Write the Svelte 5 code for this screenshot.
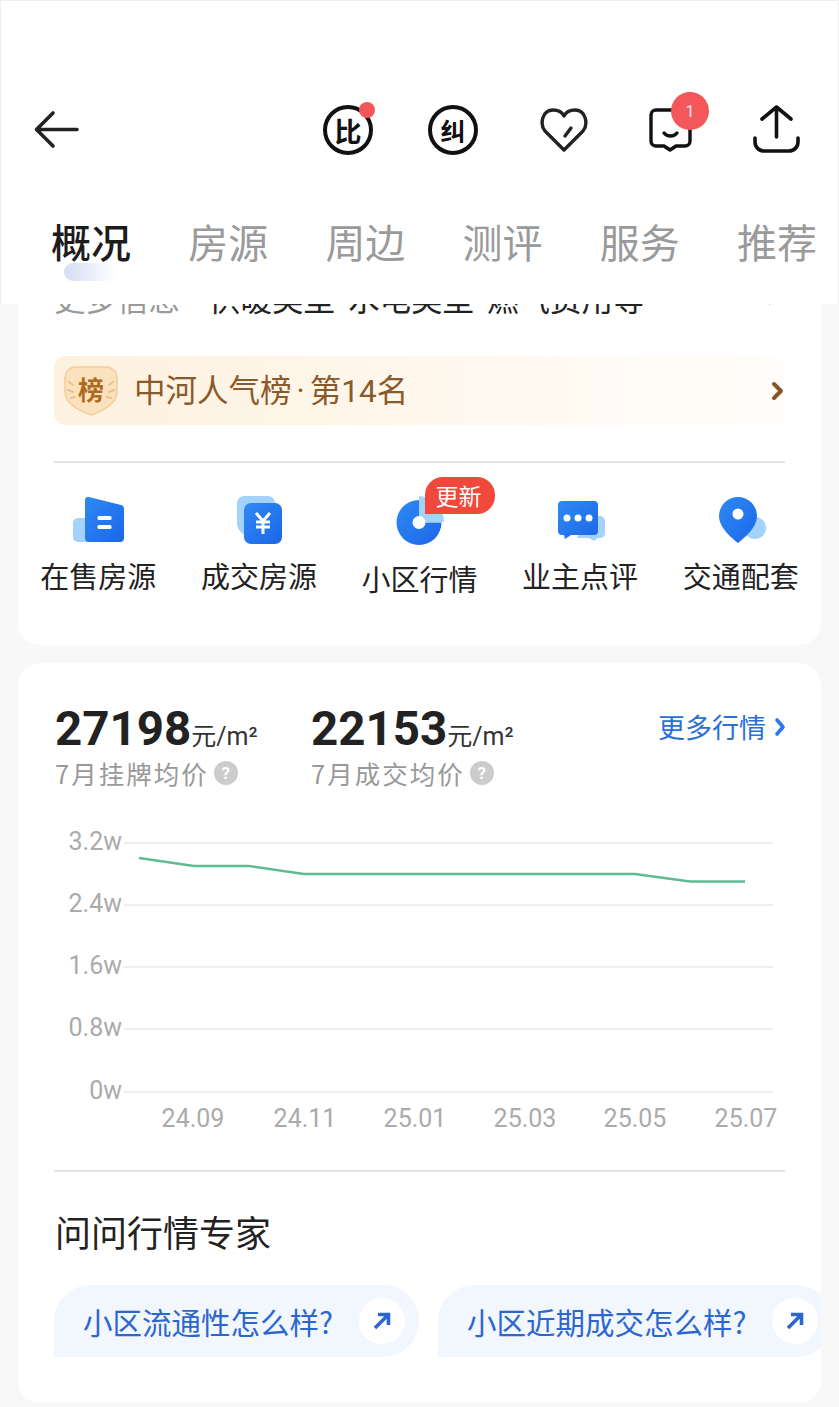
<script>
  const tabs = ['概况', '房源', '周边', '测评', '服务', '推荐'];
  const shortcuts = [
    { key: 'sale', label: '在售房源' },
    { key: 'deal', label: '成交房源' },
    { key: 'market', label: '小区行情', isNew: true },
    { key: 'review', label: '业主点评' },
    { key: 'traffic', label: '交通配套' },
  ];
  const stats = [
    { price: 27198, label: '7月挂牌均价' },
    { price: 22153, label: '7月成交均价' },
  ];

  const yTicks = [
    { y: 843, label: '3.2w' },
    { y: 905, label: '2.4w' },
    { y: 967, label: '1.6w' },
    { y: 1029, label: '0.8w' },
    { y: 1092, label: '0w' },
  ];
  const xTicks = [
    { x: 193, label: '24.09' },
    { x: 305, label: '24.11' },
    { x: 415, label: '25.01' },
    { x: 525, label: '25.03' },
    { x: 635, label: '25.05' },
    { x: 746, label: '25.07' },
  ];
  const linePoints = '139,858 194,866 249,866 304,874 635,874 690,881.5 745,881.5';
  const questions = ['小区流通性怎么样?', '小区近期成交怎么样?'];
</script>

<div class="page">
  <header class="topbar">
    <div class="actions">
      <svg class="back" width="48" height="40" viewBox="0 0 48 40" fill="none" stroke="#222" stroke-width="3.6" stroke-linecap="round" stroke-linejoin="round">
        <path d="M44 19.5H4M20 3 3.500 19.500 20 36" />
      </svg>
      <div class="icons">
        <div class="round-icon">比<span class="red-dot"></span></div>
        <div class="round-icon small">纠</div>
        <svg class="heart" width="48" height="46" viewBox="0 0 48 46" fill="none" stroke="#222" stroke-width="3.400" stroke-linecap="round" stroke-linejoin="round">
          <path d="M24 43 5 24C-1 16 3 3 13 3c5 0 9 2 11 6 2-4 6-6 11-6 10 0 14 13 8 21Z" />
          <path d="M25 29l6-8" />
        </svg>
        <div class="msg">
          <svg width="46" height="50" viewBox="0 0 46 50" fill="none" stroke="#111" stroke-width="3.400" stroke-linecap="round" stroke-linejoin="round">
            <path d="M9 5H38a5 5 0 0 1 5 5V36a5 5 0 0 1-5 5H29l-6 4-6-4H9a5 5 0 0 1-5-5V10a5 5 0 0 1 5-5Z" />
            <path d="M17 28c3 4 10 4 13 0" />
          </svg>
          <span class="badge">1</span>
        </div>
        <svg class="share" width="50" height="54" viewBox="0 0 50 54" fill="none" stroke="#111" stroke-width="3.600" stroke-linecap="round" stroke-linejoin="round">
          <path d="M24.500 34V4M10 16 24.500 4 39 16" />
          <path d="M3 35v4a9 9 0 0 0 9 9H37a9 9 0 0 0 9-9v-4" />
        </svg>
      </div>
    </div>
    <nav class="tabs">
      {#each tabs as tab, i}
        <div class="tab" class:active={i === 0}>{tab}</div>
      {/each}
    </nav>
  </header>

  <main class="content">
    <section class="card first">
      <div class="more-info">
        <span class="more-label">更多信息</span>
        <span class="more-value">供暖类型 水电类型 燃气费用等</span>
        <svg class="more-arrow" width="12" height="18" viewBox="0 0 12 18" fill="none" stroke="#bbb" stroke-width="2.500"><path d="M2 2l7 7-7 7" /></svg>
      </div>

      <div class="rank">
        <div class="rank-badge">
          <svg width="54" height="50" viewBox="0 0 54 50" fill="none">
            <path d="M12 1H42a11 11 0 0 1 11 11V26C53 38 38 45 27 49 16 45 1 38 1 26V12A11 11 0 0 1 12 1Z" fill="#fbe2bf" stroke="#f5cd9b" stroke-width="1.500" />
            <path d="M5 16l4 3M4 24l5 2M7 32l4-1M49 16l-4 3M50 24l-5 2M47 32l-4-1" stroke="#e9c08c" stroke-width="2" stroke-linecap="round" />
          </svg>
          <span>榜</span>
        </div>
        <span class="rank-text">中河人气榜<span class="rank-dot">·</span>第14名</span>
        <svg width="14" height="20" viewBox="0 0 14 20" fill="none" stroke="#8a5526" stroke-width="4" stroke-linecap="round" stroke-linejoin="round"><path d="M3 3l7 7-7 7" /></svg>
      </div>

      <div class="line"></div>

      <div class="shortcuts">
        {#each shortcuts as item}
          <div class="shortcut" class:lower={item.isNew}>
            <div class="shortcut-icon">
              {#if item.key === 'sale'}
                <svg width="52" height="48" viewBox="0 0 52 48">
                  <defs>
                    <linearGradient id="blue" x1="0" y1="0" x2="1" y2="1">
                      <stop offset="0" stop-color="#2e8af2" />
                      <stop offset="1" stop-color="#1c66ea" />
                    </linearGradient>
                  </defs>
                  <path d="M6 22h12v24H6a5 5 0 0 1-5-5V27a5 5 0 0 1 5-5Z" fill="#a3d3fb" />
                  <path d="M13 4a3 3 0 0 1 4-3l32 8a4 4 0 0 1 3 4v29a4 4 0 0 1-4 4H17a4 4 0 0 1-4-4Z" fill="url(#blue)" />
                  <rect x="25.500" y="20" width="14" height="4" rx="1.500" fill="#fff" />
                  <rect x="25.500" y="29" width="14" height="4" rx="1.500" fill="#fff" />
                </svg>
              {:else if item.key === 'deal'}
                <svg width="48" height="48" viewBox="0 0 48 48">
                  <path d="M9 0H33a7 7 0 0 1 7 7v33H15C8 40 2 34 2 27V7a7 7 0 0 1 7-7Z" fill="#a3d3fb" />
                  <rect x="9" y="7" width="38" height="41" rx="7" fill="url(#blue)" />
                  <path d="M21 17l7 8 7-8M28 25v13M21 26h14M21 31h14" fill="none" stroke="#fff" stroke-width="3" />
                </svg>
              {:else if item.key === 'market'}
                <svg class="pie" width="50" height="54" viewBox="0 0 50 54">
                  <path d="M25 3a26 26 0 0 1 25 26H25Z" fill="#a3d3fb" />
                  <path d="M25 7a22.500 22.500 0 1 0 22.500 22.500H25Z" fill="url(#blue)" />
                  <circle cx="25" cy="29.500" r="6.500" fill="#fff" />
                </svg>
                <span class="new-tag">更新</span>
              {:else if item.key === 'review'}
                <svg width="50" height="42" viewBox="0 0 50 42">
                  <path d="M33 17h12a5 5 0 0 1 5 5v13a5 5 0 0 1-5 4h-2l-4 3-5-3H22Z" fill="#a3d3fb" />
                  <path d="M7 2H39a4 4 0 0 1 4 4V32a4 4 0 0 1-4 4H16l-6 4-1-4H7a4 4 0 0 1-4-4V6a4 4 0 0 1 4-4Z" fill="url(#blue)" />
                  <circle cx="12" cy="19" r="3.500" fill="#fff" />
                  <circle cx="23" cy="19" r="3.500" fill="#fff" />
                  <circle cx="34" cy="19" r="3.500" fill="#fff" />
                </svg>
              {:else}
                <svg width="50" height="48" viewBox="0 0 50 48">
                  <circle cx="39" cy="32" r="11" fill="#a3d3fb" />
                  <path d="M22 47C16 42 3 32 3 20a19 19 0 0 1 38 0c0 12-13 22-19 27Z" fill="url(#blue)" />
                  <circle cx="22" cy="18" r="5.500" fill="#fff" />
                </svg>
              {/if}
            </div>
            <div class="shortcut-label">{item.label}</div>
          </div>
        {/each}
      </div>
    </section>

    <section class="card second">
      <div class="stats">
        {#each stats as stat}
          <div class="stat">
            <div class="stat-value"><b>{stat.price}</b><span>元/m²</span></div>
            <div class="stat-label">{stat.label}<i class="help">?</i></div>
          </div>
        {/each}
        <div class="more-market">
          更多行情
          <svg width="12" height="20" viewBox="0 0 12 20" fill="none" stroke="#2a78ea" stroke-width="3.600" stroke-linecap="round" stroke-linejoin="round"><path d="M3 3l6 7-6 7" /></svg>
        </div>
      </div>

      <svg class="chart" width="802" height="320" viewBox="18 823 802 320">
        {#each yTicks as t}
          <line x1="124" x2="773" y1={t.y} y2={t.y} stroke="#e8e8e8" stroke-width="1.500" />
          <text x="122" y={t.y + 7} text-anchor="end" class="axis">{t.label}</text>
        {/each}
        {#each xTicks as t}
          <text x={t.x} y="1127" text-anchor="middle" class="axis">{t.label}</text>
        {/each}
        <polyline points={linePoints} fill="none" stroke="#5ebb92" stroke-width="2.500" />
      </svg>

      <div class="line wide"></div>

      <h2 class="ask-title">问问行情专家</h2>
      <div class="questions">
        {#each questions as q}
          <div class="question">
            <span class="question-text">{q}</span>
            <span class="question-go">
              <svg width="20" height="20" viewBox="0 0 20 20" fill="none" stroke="#2c66cf" stroke-width="3.600"><path d="M3 17 16 4M6 3.500h10.500V14" /></svg>
            </span>
          </div>
        {/each}
      </div>
    </section>
  </main>
</div>

<style>
  :global(body) {
    margin: 0;
    background: #f8f8f8;
  }

  .page {
    width: 839px;
    height: 1407px;
    overflow: hidden;
    font-family: "Noto Sans CJK SC", "Noto Sans", sans-serif;
    display: flex;
    flex-direction: column;
  }

  .topbar {
    height: 304px;
    flex-shrink: 0;
    box-sizing: border-box;
    background: #fff;
    border: 1px solid #eee;
    border-bottom: none;
    position: relative;
    z-index: 2;
    padding-top: 89px;
  }

  .actions {
    height: 80px;
    display: flex;
    align-items: center;
    justify-content: space-between;
    padding: 0 36px 0 32px;
  }

  .icons {
    display: flex;
    align-items: center;
  }

  .round-icon {
    position: relative;
    width: 50px;
    height: 50px;
    box-sizing: border-box;
    border: 4px solid #111;
    border-radius: 50%;
    display: flex;
    align-items: center;
    justify-content: center;
    font-size: 27px;
    font-weight: 700;
    line-height: 1;
    color: #111;
  }

  .round-icon.small {
    font-size: 25px;
    margin-left: 55px;
  }

  .heart {
    margin-left: 62px;
  }

  .msg {
    margin-left: 59px;
  }

  .share {
    margin-left: 59px;
  }

  .red-dot {
    position: absolute;
    top: -7px;
    right: -6px;
    width: 16px;
    height: 16px;
    border-radius: 50%;
    background: #f4575a;
  }

  .msg {
    position: relative;
    height: 50px;
  }

  .badge {
    position: absolute;
    top: -13px;
    left: 24px;
    width: 38px;
    height: 38px;
    border-radius: 50%;
    background: #f4575a;
    color: #fde;
    font-family: "Roboto", sans-serif;
    font-size: 17px;
    line-height: 38px;
    text-align: center;
  }

  .tabs {
    display: flex;
    justify-content: space-between;
    padding: 42px 21px 0 50px;
  }

  .tab {
    position: relative;
    font-size: 40px;
    line-height: 58px;
    color: #9a9a9a;
  }

  .tab.active {
    color: #1c1c1c;
    font-weight: 500;
  }

  .tab.active::after {
    content: "";
    position: absolute;
    left: 13px;
    top: 51px;
    width: 52px;
    height: 18px;
    border-radius: 9px;
    background: linear-gradient(90deg, #d3ddf3, #ffffff);
    z-index: -1;
  }

  .content {
    flex: 1;
    min-height: 0;
    padding: 0 18px;
    display: flex;
    flex-direction: column;
    gap: 18px;
  }

  .card {
    background: #fff;
    border-radius: 22px;
    flex-shrink: 0;
  }

  .first {
    margin-top: -41px;
    height: 382px;
    padding: 14px 36px 0;
    box-sizing: border-box;
    border-radius: 0 0 22px 22px;
  }

  .more-info {
    display: flex;
    align-items: center;
    height: 40px;
    font-size: 31.500px;
    line-height: 40px;
    white-space: nowrap;
  }

  .more-label {
    color: #999;
    width: 155px;
  }

  .more-value {
    color: #222;
    flex: 1;
    word-spacing: 6px;
  }

  .more-arrow {
    margin-right: 6px;
  }

  .rank {
    margin-top: 39px;
    height: 69px;
    border-radius: 12px;
    background: linear-gradient(90deg, #fdf1df, #fff8ee 55%, #fffdfa);
    display: flex;
    align-items: center;
    padding: 0 0 0 10px;
  }

  .rank-badge {
    position: relative;
    width: 54px;
    height: 50px;
    flex-shrink: 0;
    display: flex;
    align-items: center;
    justify-content: center;
  }

  .rank-badge svg {
    position: absolute;
    inset: 0;
  }

  .rank-badge span {
    position: relative;
    color: #b06a1e;
    font-size: 26px;
    font-weight: 700;
    line-height: 1;
    margin-top: -4px;
  }

  .rank-text {
    flex: 1;
    margin-left: 16px;
    padding-top: 2px;
    font-family: "Roboto", "Noto Sans CJK SC", sans-serif;
    font-size: 31.500px;
    line-height: 68px;
    color: #8a5a2b;
  }

  .rank-dot {
    margin: 0 5px;
  }

  .line {
    height: 1.500px;
    background: #e4e4e4;
    margin-top: 36px;
  }

  .shortcuts {
    display: grid;
    grid-template-columns: repeat(5, 1fr);
    margin: 33px -36px 0;
  }

  .shortcut {
    display: flex;
    flex-direction: column;
    align-items: center;
  }

  .shortcut-icon {
    position: relative;
    height: 48px;
    display: flex;
    align-items: center;
    justify-content: center;
  }

  .new-tag {
    position: absolute;
    left: 31px;
    top: -19px;
    width: 70px;
    height: 37px;
    box-sizing: border-box;
    padding-right: 4px;
    border-radius: 18px 18px 18px 0;
    background: #f0483a;
    color: #fff;
    font-size: 23px;
    line-height: 36px;
    text-align: center;
  }

  .shortcut-label {
    margin-top: 10px;
    font-size: 29px;
    line-height: 42px;
    color: #222;
    white-space: nowrap;
  }

  .lower .shortcut-label {
    margin-top: 13px;
  }

  .second {
    height: 740px;
    overflow: hidden;
    box-sizing: border-box;
    padding: 38px 0 0;
  }

  .stats {
    display: flex;
    padding: 0 37px;
    position: relative;
  }

  .stat {
    width: 256px;
  }

  .stat-value {
    display: flex;
    align-items: baseline;
    height: 54px;
    line-height: 56px;
    color: #222;
  }

  .stat-value b {
    font-family: "Roboto", sans-serif;
    font-size: 47.500px;
    font-weight: 700;
  }

  .stat-value span {
    font-family: "Roboto", "Noto Sans CJK SC", sans-serif;
    font-size: 25px;
    color: #333;
  }

  .stat-label {
    display: flex;
    align-items: center;
    height: 36px;
    font-size: 25.500px;
    letter-spacing: 2px;
    line-height: 36px;
    color: #999;
  }

  .help {
    margin-left: 5px;
    width: 24px;
    height: 24px;
    border-radius: 50%;
    background: #ccc;
    color: #fff;
    font-family: "Roboto", sans-serif;
    font-size: 17px;
    font-style: normal;
    font-weight: 700;
    letter-spacing: 0;
    line-height: 24px;
    text-align: center;
  }

  .more-market {
    position: absolute;
    top: 5px;
    right: 35px;
    display: flex;
    align-items: center;
    gap: 8px;
    font-size: 27px;
    line-height: 42px;
    color: #2c6fd6;
  }

  .chart {
    display: block;
    margin-top: 32px;
  }

  .axis {
    font-family: "Roboto", sans-serif;
    font-size: 25px;
    fill: #ababab;
  }

  .line.wide {
    margin: 27px 36px 0;
  }

  .ask-title {
    margin: 34px 0 0 37px;
    font-size: 36px;
    font-weight: 400;
    line-height: 50px;
    color: #222;
  }

  .questions {
    display: flex;
    gap: 19px;
    margin: 29px 0 0 36px;
  }

  .question {
    height: 72px;
    flex-shrink: 0;
    box-sizing: border-box;
    display: flex;
    align-items: center;
    padding: 0 14px 0 29px;
    border-radius: 36px 36px 36px 0;
    background: #f2f6fd;
  }

  .question-text {
    font-size: 29.500px;
    line-height: 40px;
    color: #2c66cf;
    white-space: nowrap;
  }

  .question-go {
    margin-left: 26px;
    width: 46px;
    height: 46px;
    border-radius: 50%;
    background: #fff;
    display: flex;
    align-items: center;
    justify-content: center;
  }
</style>
